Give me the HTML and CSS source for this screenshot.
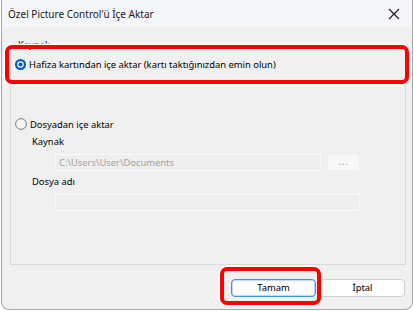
FILE: index.html
```html
<!DOCTYPE html>
<html lang="tr">
<head>
<meta charset="utf-8">
<link rel="stylesheet" href="styles.css">
</head>
<body>
<div class="window">
  <div class="titlebar">
    <span class="title">Özel Picture Control'ü İçe Aktar</span>
    <svg class="close" width="12" height="12" viewBox="0 0 12 12"><path d="M1 1 L11 11 M11 1 L1 11" stroke="#1a1a1a" stroke-width="1.1" fill="none"/></svg>
  </div>
  <div class="content">
    <div class="group">
      <div class="legend">Kaynak</div>
      <div class="row row1">
        <svg class="radio" width="11" height="11" viewBox="0 0 11 11"><circle cx="5.5" cy="5.5" r="5.5" fill="#005fb8"/><circle cx="5.5" cy="5.5" r="3.3" fill="#fff"/><circle cx="5.5" cy="5.5" r="2.1" fill="#005fb8"/></svg>
        <span>Hafiza kartından içe aktar (kartı taktığınızdan emin olun)</span>
      </div>
      <div class="row row2">
        <svg class="radio" width="12" height="12" viewBox="0 0 12 12"><circle cx="6" cy="6" r="5.4" fill="#f7f7f7" stroke="#7a7a7a" stroke-width="1"/></svg>
        <span>Dosyadan içe aktar</span>
      </div>
      <div class="sub">
        <div class="lbl">Kaynak</div>
        <div class="input-row">
          <div class="input path">C:\Users\User\Documents</div>
          <div class="browse">...</div>
        </div>
        <div class="lbl">Dosya adı</div>
        <div class="input name"></div>
      </div>
    </div>
    <div class="buttons">
      <div class="btn primary">Tamam</div>
      <div class="btn">İptal</div>
    </div>
  </div>
</div>
<div class="hl hl1"></div>
<div class="hl hl2"></div>
</body>
</html>
```

FILE: styles.css
```css
* { box-sizing: border-box; }
html, body { margin: 0; padding: 0; background: #ffffff; }
body {
  font-family: "Noto Sans", "Open Sans", sans-serif;
  font-size: 9.4px;
  color: #000;
  width: 414px;
  height: 311px;
  overflow: hidden;
}
.window {
  margin-left: 1px;
  width: 412px;
  height: 310px;
  background: #f0f0f0;
  border: 1px solid #a8a8a8;
  border-top: none;
  border-radius: 0 0 8px 8px;
  overflow: hidden;
}
.titlebar {
  height: 27px;
  background: #f4f6fa;
  display: flex;
  align-items: center;
  justify-content: space-between;
  padding: 0 12px 0 6px;
}
.title { font-size: 10px; color: #1a1a1a; }
.close { display: block; margin-top: 1px; }
.content { padding: 19px 6px 0 8px; }
.group {
  position: relative;
  height: 219px;
  border: 1px solid #dadada;
  padding-left: 4px;
}
.legend {
  position: absolute;
  left: 5px;
  top: -9px;
  padding: 0 2px;
  background: #f0f0f0;
  line-height: 14px;
}
.row { display: flex; align-items: center; }
.row span { margin-left: 3px; }
.row1 { height: 34px; }
.row2 { height: 16px; margin-top: 35px; }
.radio { display: block; }
.sub { padding-left: 17px; }
.lbl { height: 14px; line-height: 14px; margin-top: 3px; }
.input-row { display: flex; align-items: center; margin-top: 5px; margin-left: 23px; }
.input {
  height: 17px;
  border: 1px solid #f9f9f9;
  background: #efefef;
  color: #a2a2a2;
  line-height: 15px;
  padding-left: 3px;
}
.path { width: 266px; }
.name { width: 305px; margin-left: 23px; margin-top: 5px; }
.input-row + .lbl { margin-top: 4px; }
.browse {
  margin-left: 7px;
  width: 31px;
  height: 15px;
  background: #f8f8f8;
  border-radius: 3px;
  color: #8a8a8a;
  text-align: center;
  line-height: 14px;
  font-size: 9px;
  letter-spacing: 1px;
}
.buttons {
  display: flex;
  justify-content: flex-end;
  gap: 4px;
  margin-top: 14px;
  padding-right: 1px;
}
.btn {
  width: 85px;
  height: 18px;
  background: #fdfdfd;
  border: 1px solid #d0d0d0;
  border-radius: 4px;
  text-align: center;
  line-height: 16px;
}
.btn.primary { border-color: #4a8fd3; box-shadow: inset 0 0 0 0.5px #8ab8e6; }
.hl {
  position: absolute;
  border: 4px solid #ff0000;
  border-radius: 7px;
  box-shadow: 0 0 0 1.5px #ffffff;
}
.hl1 { left: 5px; top: 45px; width: 404px; height: 39px; }
.hl2 { left: 220px; top: 267px; width: 101px; height: 38px; }
```
